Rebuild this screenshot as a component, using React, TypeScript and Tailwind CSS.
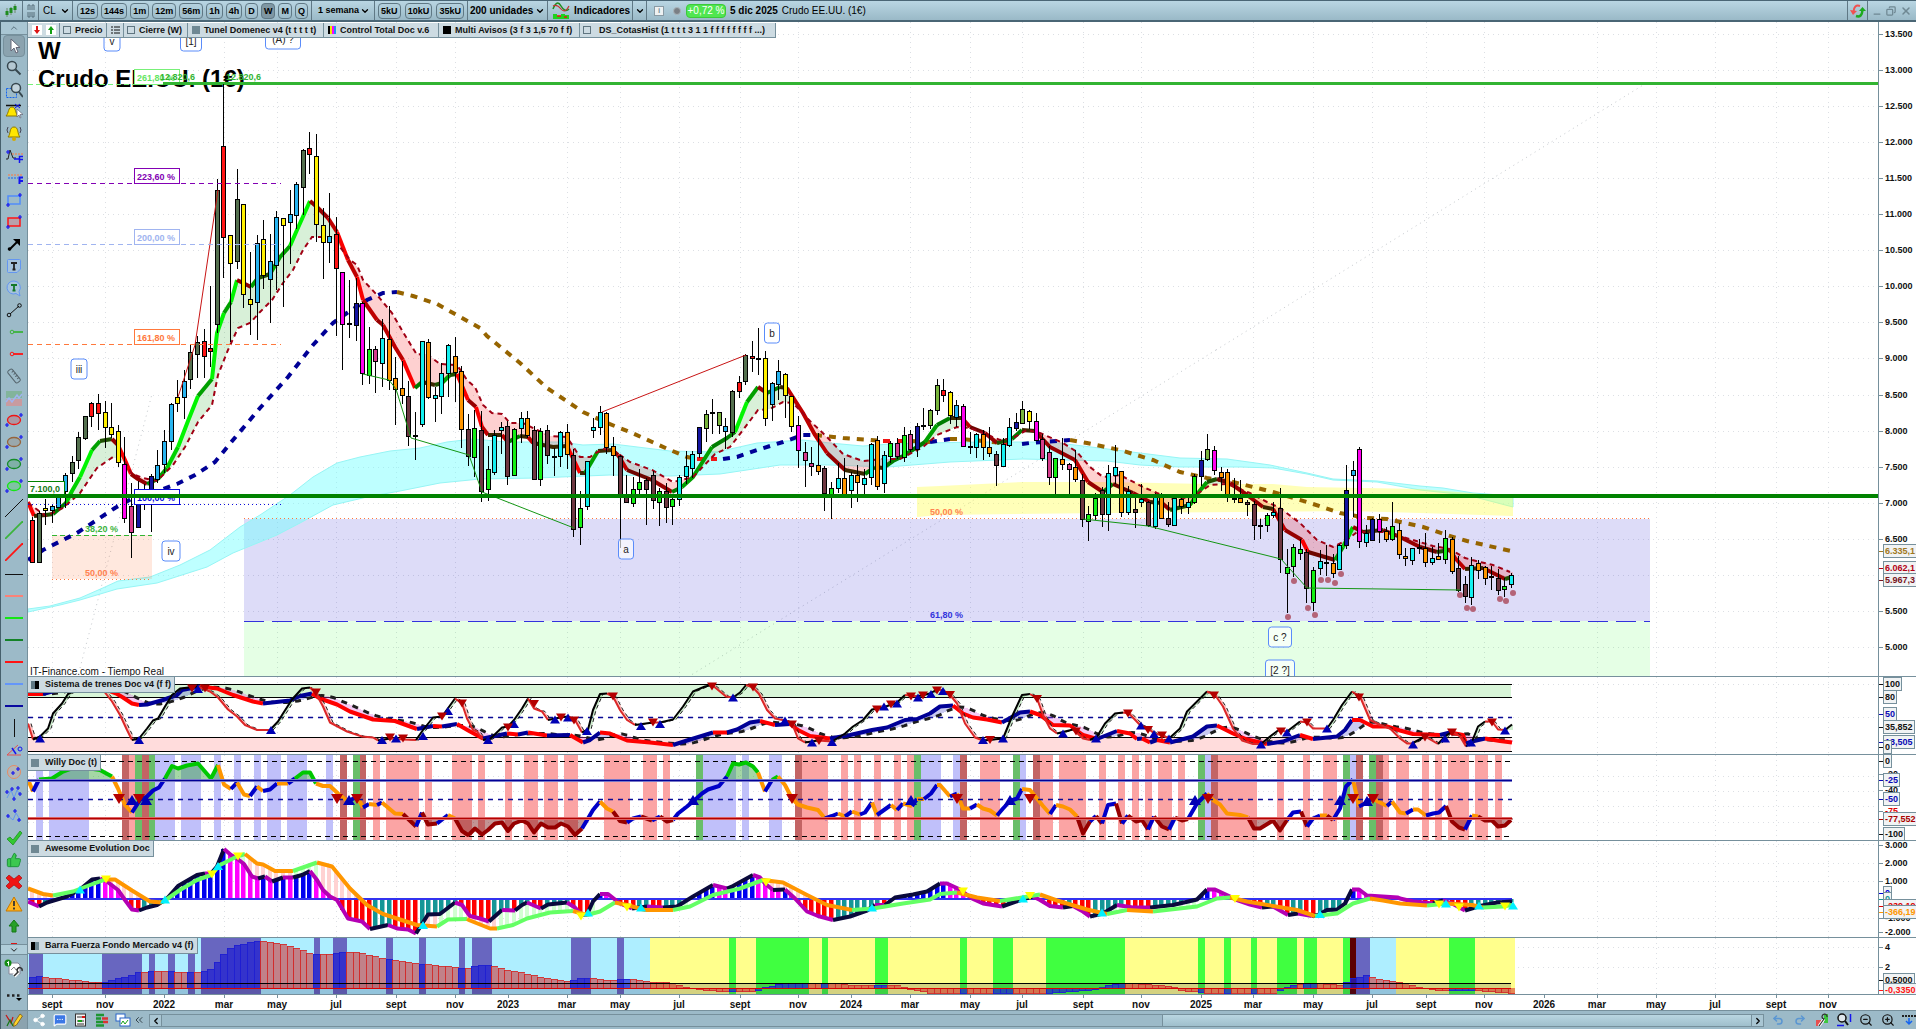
import React from "react";
import {
  Search, Ruler, ThumbsUp, Share2, MessageSquareMore, Undo2, Redo2, ZoomIn, ZoomOut,
  ChevronDown, ChevronUp, ChevronLeft, ChevronRight, ChevronsLeft, X, Minus, Copy,
} from "lucide-react";

type Pt = [number, number];

/* ---------- geometry helpers ---------- */

const STEP = 6.603;
const LAST = 224;
const barX = (i: number) => 32.5 + STEP * i;

/** Parses "x,y x,y" into points. */
const pts = (s: string): Pt[] => s.trim().split(/\s+/).map((p) => p.split(",").map(Number) as Pt);

/** Points sampled on a grid three times finer than the drawing, with its own origin. */
const fine = (ox: number, oy: number, s: string): Pt[] =>
  pts(s).map(([x, y]) => [Math.round(ox + x / 3), Math.round((oy + y / 3) * 2) / 2]);

const at = (line: Pt[], x: number) => {
  if (x <= line[0][0]) return line[0][1];
  for (let i = 1; i < line.length; i++) {
    const [x0, y0] = line[i - 1];
    const [x1, y1] = line[i];
    if (x <= x1) return x1 === x0 ? y1 : y0 + ((y1 - y0) * (x - x0)) / (x1 - x0);
  }
  return line[line.length - 1][1];
};

const poly = (line: Pt[]) => line.map((p) => p.join(",")).join(" ");

const spans = (ox: number, s: string) =>
  s.trim().split(/\s+/).map((p) => {
    const [a, b] = p.split("-").map(Number);
    return [Math.round(ox + a / 3), Math.round(ox + b / 3)] as Pt;
  });

function Stroke({ line, width, color, dash }: { line: Pt[]; width: number; color: (a: Pt, b: Pt) => string; dash?: string }) {
  const runs: { c: string; p: Pt[] }[] = [];
  for (let i = 1; i < line.length; i++) {
    if (line[i][0] < line[i - 1][0]) continue;
    const c = color(line[i - 1], line[i]);
    const last = runs[runs.length - 1];
    if (last && last.c === c) last.p.push(line[i]);
    else runs.push({ c, p: [line[i - 1], line[i]] });
  }
  return (
    <>
      {runs.map((r, i) => (
        <polyline key={i} points={poly(r.p)} fill="none" stroke={r.c} strokeWidth={width} strokeDasharray={dash} strokeLinejoin="round" />
      ))}
    </>
  );
}

/** Area between two lines, coloured by which of them is on top. */
function Between({ a, b, over, under, x0, x1 }: { a: Pt[]; b: Pt[]; over: string; under: string; x0: number; x1: number }) {
  const cells = [];
  for (let x = x0; x < x1; x += 3) {
    const [p, q, r, s] = [at(a, x), at(a, x + 3), at(b, x + 3), at(b, x)];
    const fill = p + q < r + s ? over : under;
    if (fill !== "none") cells.push(<polygon key={x} shapeRendering="crispEdges" fill={fill} points={`${x},${p} ${x + 3},${q} ${x + 3},${r} ${x},${s}`} />);
  }
  return <>{cells}</>;
}

function Marks({ p, color, down, r = 5 }: { p: Pt[]; color: string; down?: boolean; r?: number }) {
  return (
    <>
      {p.map(([x, y], i) => (
        <polygon key={i} fill={color} points={down ? `${x - r},${y - r + 1} ${x + r},${y - r + 1} ${x},${y + r - 1}` : `${x - r},${y + r - 1} ${x + r},${y + r - 1} ${x},${y - r + 1}`} />
      ))}
    </>
  );
}

/* ---------- price data ---------- */

const FILL: Record<string, string> = {
  g: "#54704f", r: "#ff1414", b: "#28b4f0", y: "#fff000", m: "#ff00f0", k: "#d63c8c", n: "#1414a0",
  c: "#14f0f0", l: "#14f014", o: "#ff9600", w: "#6e3741", v: "#78b43c", d: "#000000",
};

const CANDLES = `r517,520,562,562 g511,513,562,562 y499,508,510,525 b505,506,510,523 b495,497,507,507 b473,475,491,508 g456,462,473,482 g432,437,460,469
g416,416,438,440 r402,403,416,427 r394,403,413,430 y401,412,427,448 y403,427,434,438 y425,431,462,467 m437,464,518,523 k483,506,532,558
n481,500,527,527 n484,491,493,510 n474,476,500,532 b450,465,479,483 b430,441,464,473 b403,404,441,450 y380,397,403,412 b370,381,397,419
g345,352,379,389 g336,342,354,378 r329,341,356,378 r286,348,351,367 g179,190,324,333 r84,146,237,278 y235,235,263,342 g169,199,261,269
y204,204,294,308 y252,299,304,335 b235,243,302,340 y220,239,275,289 b234,261,279,323 b211,217,265,290 y218,218,225,307 b190,214,222,264
b182,184,215,229 g149,150,187,215 r132,148,154,174 y134,156,224,242 y208,225,242,279 b193,236,242,263 r217,234,268,336 m272,272,324,370
d280,323,324,338 n278,303,325,341 m302,303,373,385 l327,349,375,384 k346,349,361,393 c319,338,363,387 o306,339,380,390 o357,378,389,425
o361,388,395,404 w381,396,436,446 d412,435,436,460 c341,341,424,427 o339,342,397,399 c387,395,398,422 c363,373,396,414 c344,345,373,397
o337,356,372,402 o366,371,429,448 w414,429,456,466 l410,428,457,477 w411,430,491,502 l446,469,489,501 c430,435,472,475 c422,427,430,454
w421,426,476,485 l428,429,475,476 c412,418,428,443 o411,418,435,438 w426,430,479,480 l428,431,479,486 w425,430,455,464 d448,456,457,476
c431,432,456,467 o424,432,454,469 w449,455,529,537 l491,508,527,545 c461,461,506,510 c418,427,430,438 c406,412,427,435 o412,413,447,454
o437,446,455,476 w455,456,494,548 w475,496,502,503 l477,489,503,507 l469,482,489,498 w478,480,489,525 w471,475,500,509 l488,491,502,526
w483,491,507,523 l498,499,506,525 c475,477,499,506 c451,466,476,484 c451,454,468,478 n427,427,453,458 v410,414,428,442 d399,412,413,434
v412,412,425,434 b418,426,431,449 g390,391,432,437 r376,382,391,398 g354,355,381,385 r341,356,358,372 d328,358,359,375 y351,358,418,426
b382,383,404,421 b360,371,384,400 y373,374,395,418 y396,396,426,432 m416,425,450,468 k442,452,460,487 k447,463,466,476 o433,465,471,475
w466,468,493,511 l482,488,497,519 c463,478,488,493 o458,478,494,497 c472,475,490,508 o465,475,482,502 c469,478,484,498 c443,444,477,485
o436,440,486,490 c451,455,483,493 l441,443,456,463 k438,443,456,459 l427,435,457,462 k430,434,449,452 n423,426,449,457 d408,425,426,430
v409,410,425,429 v379,385,410,415 r379,390,395,402 y391,392,415,424 b400,405,417,427 m404,406,446,447 d432,446,447,454 c433,434,447,458
o430,434,447,460 o427,447,453,457 w451,454,465,486 c438,444,466,467 c418,427,445,447 n413,422,428,431 v401,409,423,424 y410,411,421,429
m413,421,440,441 k434,439,458,461 k446,452,477,485 l458,458,477,494 o438,459,464,470 k463,464,469,494 o450,467,479,482 w474,480,519,527
l506,514,521,541 l493,498,515,520 w487,490,514,527 c465,473,514,531 c445,467,475,484 o471,471,512,517 c486,491,512,515 w497,509,512,528
c484,499,502,507 w501,502,525,527 c493,496,526,529 o493,496,518,519 w502,518,524,527 c497,498,525,526 o498,499,506,514 c498,502,507,514
l474,476,502,504 n451,460,476,486 v434,449,459,461 m446,450,470,475 o467,472,477,491 o469,472,497,502 o478,498,499,503 o480,498,502,503
w500,502,504,516 w501,504,525,540 d519,525,526,539 l513,515,525,532 c502,512,515,518 w488,508,559,573 l549,567,573,613 l544,547,566,577
l539,549,553,560 w549,552,588,603 l567,570,602,611 c550,561,568,575 d545,562,563,576 o554,563,573,578 c544,545,569,570 n465,490,545,549
b461,470,475,517 m447,449,541,548 c525,533,542,547 n518,519,540,541 m514,519,531,543 o527,531,539,542 l502,526,539,541 o523,530,554,559
o548,556,558,566 c548,548,560,565 d539,547,548,554 o533,548,562,567 c547,558,562,565 o543,556,559,560 l530,538,559,564 o537,539,571,574
w556,568,590,592 w576,584,596,603 c557,565,597,605 o560,563,570,579 o566,567,578,585 d566,576,577,590 w569,578,590,595 l578,586,589,597
c573,575,584,588`.trim().split(/\s+/).map((c) => [c[0], ...c.slice(1).split(",").map(Number)] as [string, number, number, number, number]);

const TUNNEL = pts(`28,502 34,516 46,515 53,514 66,503 72,491 80,477 92,450 100,441 112,439 118,445 125,460 131,474 138,479 147,484 158,479 167,468 178,447 188,421 198,396 212,379 217,333 224,313 231,302 237,280 251,287 258,278 270,274 280,257 290,246 297,230 310,201 317,207 328,218 337,232 348,260 357,277 363,300 377,320 383,325 395,347 403,360 415,388 422,382 435,385 442,383 450,375 457,374 468,400 476,407 482,427 488,435 502,435 508,442 520,436 528,437 533,443 553,447 567,446 580,473 585,473 598,451 612,450 618,455 627,470 652,480 672,492 682,487 693,477 712,447 727,438 735,432 747,402 758,387 767,393 780,387 787,388 803,413 815,435 827,453 845,470 865,474 875,467 883,468 893,461 903,456 925,442 937,425 950,418 962,418 970,427 985,433 997,443 1012,439 1022,430 1035,431 1050,447 1075,460 1088,482 1103,492 1113,484 1133,493 1150,502 1162,503 1170,510 1190,505 1198,493 1207,482 1217,479 1230,483 1247,495 1263,507 1273,509 1285,530 1302,540 1308,552 1335,560 1343,547 1353,527 1363,532 1383,530 1400,537 1420,547 1437,552 1450,550 1455,558 1465,569 1483,568 1505,579 1512,577`);
const SIGNAL = pts(`28,503 46,516 63,508 80,493 97,468 113,457 125,462 132,474 143,478 157,481 173,465 185,447 198,422 212,405 218,375 228,350 238,328 250,323 260,312 272,300 283,283 293,270 303,250 312,237 330,237 337,243 350,260 357,265 363,280 377,295 392,313 403,332 417,355 425,353 440,364 457,365 467,380 475,387 483,405 492,413 502,414 510,423 523,423 537,430 550,436 567,437 580,457 590,457 602,449 613,450 630,462 652,470 673,482 693,477 715,454 730,447 743,430 758,410 770,409 783,402 793,403 810,421 827,437 843,454 863,461 882,459 900,459 923,447 937,435 957,427 970,428 983,433 1000,440 1013,438 1027,430 1040,433 1063,443 1077,452 1090,467 1103,477 1120,475 1143,487 1157,493 1173,499 1193,497 1210,485 1227,484 1250,493 1267,502 1280,508 1300,523 1317,540 1333,547 1347,540 1357,532 1387,532 1403,537 1433,546 1450,549 1465,558 1480,562 1493,565 1510,572`);

const TREND: [string, string][] = [
  ["#000096", "28,560 43,550 77,533 115,508 133,498 163,489 177,484 195,475 215,462 233,440 260,408 288,377 313,345 333,323 347,313 367,300 383,293 397,292"],
  ["#966400", "397,292 413,296 437,304 480,328 487,336 520,363 547,388 583,412 607,423 630,432 670,450 687,457 697,459"],
  ["#f01414", "697,459 717,459"],
  ["#000096", "723,459 737,457 757,450 783,442 803,435 815,435"],
  ["#966400", "815,435 843,438 883,441"],
  ["#f01414", "883,441 891,441 900,441 910,441"],
  ["#966400", "910,441 930,442"],
  ["#000096", "930,442 950,439"],
  ["#966400", "950,439 960,439 983,441 1003,443"],
  ["#f01414", "1003,443 1015,445"],
  ["#000096", "1022,444 1030,443 1070,440"],
  ["#966400", "1070,440 1087,443 1120,450 1153,460 1180,472 1207,478 1233,482 1273,492 1307,502 1340,513 1367,518 1387,519 1423,527 1447,535 1467,541 1511,551"],
];

const CLOUD = "28,609 50,606 80,598 105,587 118,581 150,577 180,565 210,550 240,527 260,515 290,495 313,477 337,463 360,457 390,451 420,448 447,442 473,439 507,442 560,442 583,445 613,444 670,451 717,452 757,443 803,440 830,443 863,446 890,444 923,443 983,442 1050,442 1083,446 1140,453 1180,458 1227,459 1270,465 1307,473 1333,479 1377,481 1420,486 1443,488 1473,493 1513,496 1513,507 1467,495 1420,490 1377,482 1333,480 1307,474 1273,468 1240,467 1180,467 1140,465 1107,461 1023,459 950,462 887,467 830,465 780,465 720,474 670,476 610,475 537,478 480,479 440,483 400,491 367,497 333,505 300,523 277,535 233,553 207,567 157,583 117,589 80,600 60,605 28,612";

const DOTS = pts("1294,581 1288,617 1308,608 1315,615 1321,580 1328,580 1335,583 1341,574 1460,595 1467,608 1473,609 1500,599 1506,601 1513,593");

const MONTHS: [number, string][] = [
  [52, "sept"], [105, "nov"], [164, "2022"], [224, "mar"], [277, "may"], [336, "jul"], [396, "sept"], [455, "nov"], [508, "2023"],
  [567, "mar"], [620, "may"], [679, "jul"], [740, "sept"], [798, "nov"], [851, "2024"], [910, "mar"], [970, "may"], [1022, "jul"],
  [1083, "sept"], [1141, "nov"], [1201, "2025"], [1253, "mar"], [1313, "may"], [1372, "jul"], [1426, "sept"], [1484, "nov"], [1544, "2026"],
  [1597, "mar"], [1656, "may"], [1715, "jul"], [1776, "sept"], [1828, "nov"],
];
const DOT_GRID = "1 4";
const LINE = "#76909c";

function maColor(a: Pt, b: Pt) {
  const s = (b[1] - a[1]) / (b[0] - a[0] || 1);
  if (s < -2.2) return "#00f500";
  if (s < -1.7) return "#00d200";
  if (s < -0.9) return "#00a000";
  if (s < -0.4) return "#007d00";
  if (s < -0.1) return "#1e5000";
  if (s < 0.25) return "#3c2800";
  if (s < 0.5) return "#6e0500";
  if (s < 1.1) return "#960000";
  if (s < 1.9) return "#be0000";
  return "#fa0000";
}

function Pane({ top, height, grid, children, label }: { top: number; height: number; grid: number[]; children: React.ReactNode; label: string }) {
  return (
    <svg role="img" aria-label={label} viewBox={`28 ${top} 1888 ${height}`} preserveAspectRatio="none" className="block h-full w-full font-['Liberation_Sans',Arial,sans-serif]">
      <rect x="28" y={top} width="1888" height={height} fill="#fff" />
      <g stroke="#dcdfe4" strokeDasharray={DOT_GRID} shapeRendering="crispEdges">
        {grid.map((y) => <line key={y} x1="28" x2="1878" y1={y + 0.5} y2={y + 0.5} />)}
        {MONTHS.filter((m) => !m[1].startsWith("20")).map(([x]) => <line key={x} x1={x + 0.5} x2={x + 0.5} y1={top} y2={top + height} />)}
      </g>
      {children}
      <g stroke={LINE} shapeRendering="crispEdges">
        <line x1="1878.5" x2="1878.5" y1={top} y2={top + height} />
        <line x1="28" x2="1916" y1={top + height - 0.5} y2={top + height - 0.5} />
      </g>
    </svg>
  );
}

function Tick({ y, text, color = "#111" }: { y: number; text: string; color?: string }) {
  return (
    <g>
      <line x1="1879" x2="1883" y1={y + 0.5} y2={y + 0.5} stroke={LINE} shapeRendering="crispEdges" />
      <text x="1885" y={y + 3} fontSize="9" fontWeight="700" fill={color}>{text}</text>
    </g>
  );
}

function Tag({ y, text, color = "#111", w }: { y: number; text: string; color?: string; w: number }) {
  return (
    <g>
      <line x1="1879" x2="1883" y1={y + 0.5} y2={y + 0.5} stroke={color} shapeRendering="crispEdges" />
      <rect x="1883.5" y={y - 6.5} width={w} height="13" fill="#f1f3f4" stroke={LINE} />
      <text x="1885" y={y + 3} fontSize="9" fontWeight="700" fill={color}>{text}</text>
    </g>
  );
}

function Wave({ x, y, w, text }: { x: number; y: number; w: number; text: string }) {
  return (
    <g>
      <rect x={x - w / 2} y={y - 10} width={w} height="20" rx="3" fill="#fff" fillOpacity="0.65" stroke="#5a8cfa" />
      <text x={x} y={y + 4} fontSize="10" textAnchor="middle" fill="#222">{text}</text>
    </g>
  );
}

function Fib({ y, text, color, dash }: { y: number; text: string; color: string; dash: string }) {
  return (
    <g>
      <line x1="28" x2="281" y1={y + 0.5} y2={y + 0.5} stroke={color} strokeDasharray={dash} shapeRendering="crispEdges" />
      <rect x="134.5" y={y - 14.5} width="45" height="15" fill="#fff" stroke={color} shapeRendering="crispEdges" />
      <text x="137" y={y - 3} fontSize="9" fontWeight="700" fill={color}>{text}</text>
    </g>
  );
}

function PriceChart() {
  const ticks = Array.from({ length: 18 }, (_, i) => Math.round(34 + i * 36.05));
  return (
    <Pane top={22} height={655} grid={ticks} label="Crudo EE.UU. semanal">
      <g stroke="#c4c8cc" strokeDasharray="1 4">
        <line x1="80" y1="668" x2="152" y2="394" />
        <line x1="688" y1="677" x2="1216" y2="350" />
        <line x1="1216" y1="350" x2="1648" y2="82" />
      </g>
      <rect x="244" y="519" width="1406" height="102" fill="#4038d8" fillOpacity="0.175" />
      <rect x="244" y="621" width="1406" height="56" fill="#00ff00" fillOpacity="0.1" />
      <polygon points={CLOUD} fill="#6effff" fillOpacity="0.45" stroke="#96f5f5" strokeWidth="1" />
      <polygon points="917,487 940,486 1023,482 1107,482 1207,484 1273,484 1307,487 1420,489 1470,493 1513,497 1513,516 1420,513 1350,511 1107,513 940,515 917,517" fill="#ffff50" fillOpacity="0.4" />
      <line x1="244" x2="1650" y1="518.5" y2="518.5" stroke="#ff783c" strokeDasharray="1 3" shapeRendering="crispEdges" />
      <line x1="244" x2="1650" y1="621.5" y2="621.5" stroke="#3232dc" strokeDasharray="20 8" shapeRendering="crispEdges" />
      <rect x="52" y="535" width="100" height="44" fill="#ff783c" fillOpacity="0.17" />
      <line x1="52" x2="152" y1="535.5" y2="535.5" stroke="#32b432" strokeDasharray="5 3" shapeRendering="crispEdges" />
      <line x1="52" x2="152" y1="579.5" y2="579.5" stroke="#ff783c" strokeDasharray="1 3" shapeRendering="crispEdges" />
      <Between a={TUNNEL} b={SIGNAL} over="rgba(60,180,60,0.2)" under="rgba(250,60,60,0.24)" x0={28} x1={1511} />

      <g fontSize="24" fontWeight="700" fill="#000">
        <text x="38" y="59">W</text>
        <text x="38" y="87">Crudo EE.UU. (1€)</text>
      </g>
      <line x1="28" x2="163" y1="84.5" y2="84.5" stroke="#78f078" strokeDasharray="5 3" shapeRendering="crispEdges" />
      <rect x="134.5" y="69.5" width="45" height="15" fill="#fff" stroke="#78f078" shapeRendering="crispEdges" />
      <text x="137" y="81" fontSize="9" fontWeight="700" fill="#64e664">261,80 %</text>
      <g fontSize="9" fontWeight="700" fill="#32b432">
        <text x="160" y="80">12.820,6</text>
        <text x="226" y="80">12.820,6</text>
      </g>
      <rect x="163" y="82" width="1715" height="3" fill="#32b432" />

      {TREND.map(([c, s], i) => (
        <polyline key={i} points={s} fill="none" stroke={c} strokeWidth="4" strokeDasharray="7 7" />
      ))}
      <Stroke line={TUNNEL} width={4} color={maColor} />
      <polyline points={poly(SIGNAL)} fill="none" stroke="#a00014" strokeWidth="2" strokeDasharray="5 4" />

      {CANDLES.map(([k, hi, top, bot, lo], i) => {
        const x = Math.floor(barX(i));
        return (
          <g key={i} shapeRendering="crispEdges">
            <rect x={x} y={hi} width="1" height={Math.max(1, lo - hi)} fill="#000" />
            <rect x={x - 1.5} y={top + 0.5} width="4" height={Math.max(0.5, bot - top - (k === "d" ? 0.5 : 0))} fill={FILL[k]} stroke="#000" />
          </g>
        );
      })}

      <g stroke="#c81414">
        <line x1="178" y1="397" x2="195" y2="345" />
        <line x1="195" y1="345" x2="218" y2="190" />
        <line x1="602" y1="412" x2="746" y2="355" />
      </g>
      <g stroke="#149614" fill="none">
        <polyline points="363,374 389,380 396,389 411,438 469,455 482,492 574,528" />
        <polyline points="1083,519 1148,526 1281,559 1307,588 1460,590" />
      </g>
      {DOTS.map(([x, y], i) => <circle key={i} cx={x} cy={y} r="3" fill="#b46478" />)}

      <g fontSize="9" fontWeight="700">
        <text x="85" y="532" fill="#3cb43c">38,20 %</text>
        <text x="85" y="576" fill="#ff8250">50,00 %</text>
        <text x="930" y="515" fill="#ff8250">50,00 %</text>
        <text x="930" y="618" fill="#3232dc">61,80 %</text>
      </g>
      <Fib y={183} text="223,60 %" color="#8200b4" dash="5 4" />
      <Fib y={244} text="200,00 %" color="#a0b4f0" dash="5 4" />
      <Fib y={344} text="161,80 %" color="#ff783c" dash="5 4" />
      <Fib y={504} text="100,00 %" color="#0a0adc" dash="1 3" />
      <rect x="28" y="494" width="1850" height="4" fill="#008200" />
      <rect x="27.5" y="481.5" width="37" height="13" fill="#fff" stroke="#008200" />
      <text x="30" y="492" fontSize="9" fontWeight="700" fill="#147814">7.100,0</text>

      <Wave x={112} y={41} w={16} text="v" />
      <Wave x={191} y={41} w={21} text="[1]" />
      <Wave x={283} y={39} w={35} text="(A) ?" />
      <Wave x={79} y={369} w={16} text="iii" />
      <Wave x={171} y={551} w={18} text="iv" />
      <Wave x={626} y={549} w={15} text="a" />
      <Wave x={772} y={333} w={15} text="b" />
      <Wave x={1280} y={637} w={23} text="c ?" />
      <Wave x={1280} y={670} w={29} text="[2 ?]" />
      <text x="30" y="675" fontSize="10" fill="#111">IT-Finance.com - Tiempo Real</text>

      {ticks.map((y, i) => {
        const v = 13500 - i * 500;
        return v === 6000 ? null : <Tick key={y} y={y} text={`${Math.floor(v / 1000)}.${String(v % 1000).padStart(3, "0")}`} />;
      })}
      <Tag y={551} text="6.335,1" color="#a0781e" w={36} />
      <Tag y={568} text="6.062,1" color="#b40014" w={36} />
      <Tag y={580} text="5.967,3" color="#78141e" w={36} />
    </Pane>
  );
}

/* ---------- Sistema de trenes ---------- */

const FAST = [
  ...fine(0, 670, "84,160 98,208 120,200 143,175 160,130 185,100 205,72 250,50 310,60 335,95 360,135 380,180 397,210 417,205 440,175 460,152 475,145 495,110 515,75 540,55 595,50 630,65 655,82 685,118 710,140 735,165 770,180 810,180 835,155 850,130 875,88 905,55 930,52 948,70 970,110 990,157 1040,185 1085,200 1120,203 1135,212 1170,205 1210,208 1248,210 1270,180 1300,142 1325,140 1365,85 1385,100 1400,145 1420,180"),
  ...fine(470, 670, "20,185 40,210 60,207 95,172 115,170 133,150 155,115 173,85 193,115 215,125 235,150 270,143 293,140 315,150 335,188 355,178 370,120 390,72 410,70 430,80 450,120 470,150 495,165 550,157 570,158 610,148 640,110 668,65 705,50 727,45 768,80 790,82 810,68 827,45 848,52 868,72 890,120 915,145 945,152 965,160 985,205 1005,217 1045,212 1085,215 1125,190 1150,170 1180,150 1205,118 1240,112 1280,98 1305,75 1340,80 1380,70 1400,58"),
  ...fine(940, 670, "10,62 30,75 50,100 75,160 105,203 130,212 190,205 215,140 247,75 270,72 290,85 310,135 330,175 350,190 400,178 430,205 450,210 470,200 495,160 525,130 550,127 567,130 600,165 625,175 645,192 665,195 687,205 720,175 740,125 770,95 800,65 825,75 850,110 880,175 905,212 940,222 962,222 990,200 1015,182 1040,185 1080,155 1100,157 1120,175 1160,175 1180,150 1205,105 1237,65 1260,80 1290,150 1320,165 1350,175"),
  ...fine(1400, 670, "0,205 20,220 37,220 75,200 115,222 135,200 155,185 180,200 197,230 215,215 235,170 255,155 275,155 295,178 315,180 335,163"),
];
const SLOW = [
  ...fine(0, 670, "84,72 130,72 200,52 300,52 350,72 370,82 395,100 417,105 440,103 490,90 530,75 545,60 600,50 650,55 700,75 760,95 790,100 870,92 900,78 935,70 960,85 1010,103 1050,125 1120,148 1185,153 1250,177 1300,168 1325,170 1370,162"),
  ...fine(470, 670, "0,185 40,205 110,190 145,193 175,188 230,197 300,195 340,217 360,210 390,188 420,190 470,212 540,217 610,225 650,212 730,188 770,187 800,178 840,157 870,153 915,165 960,162 985,180 1020,198 1080,205 1140,195 1205,180 1250,172 1305,150 1340,147 1380,130"),
  ...fine(940, 670, "0,110 40,107 70,130 100,143 140,148 185,157 240,128 270,125 300,135 340,165 390,167 430,195 470,207 530,183 570,190 590,207 605,205 630,217 650,210 690,217 760,200 800,170 830,167 880,190 920,208 980,222 1030,215 1080,195 1120,207 1190,200 1215,180 1237,150 1260,150 1300,170 1340,170"),
  ...fine(1400, 670, "0,182 40,192 120,195 150,187 190,195 197,220 215,215 255,205 300,213 335,217"),
];
const shift = (line: Pt[], dx: number): Pt[] => line.map(([x, y]) => [x + dx, y] as Pt).filter(([x]) => x <= 1512);
const SLOW_LAG = (() => {
  const out: Pt[] = [];
  for (let x = 28; x <= 1511; x += 6) out.push([x, (at(SLOW, x - 6) + at(SLOW, x - 14) + at(SLOW, x - 22)) / 3]);
  return out;
})();

function TrainsPane() {
  return (
    <Pane top={677} height={78} grid={[684, 717]} label="Sistema de trenes Doc v4">
      <rect x="28" y="684" width="1483" height="13" fill="#d8f5d8" />
      <rect x="28" y="738" width="1483" height="13" fill="#ffdcdc" />
      <g stroke="#000" shapeRendering="crispEdges">
        {[684.5, 697.5, 737.5, 751.5].map((y) => <line key={y} x1="28" x2="1512" y1={y} y2={y} />)}
      </g>
      <line x1="28" x2="1512" y1="717.5" y2="717.5" stroke="#0a0a96" strokeWidth="1.5" strokeDasharray="5 5" />
      <Between a={SLOW} b={SLOW_LAG} over="rgba(40,40,200,0.25)" under="rgba(220,80,220,0.3)" x0={28} x1={1511} />
      <Between a={FAST} b={shift(FAST, 3)} over="rgba(60,180,60,0.25)" under="rgba(250,60,60,0.3)" x0={28} x1={1511} />
      <polyline points={poly(SLOW_LAG)} fill="none" stroke="#1e1e1e" strokeWidth="3" strokeDasharray="6 6" />
      <Stroke line={SLOW} width={4} color={(a, b) => (b[1] < a[1] ? "#000096" : "#ff0000")} />
      <polyline points={poly(shift(FAST, 3))} fill="none" stroke="#222" strokeDasharray="4 3" />
      <Stroke line={FAST} width={2} color={(a, b) => (b[1] < a[1] ? "#000" : "#dc2828")} />
      <Marks color="#0000b4" p={[
        ...fine(0, 670, "120,205 417,210 593,57 812,180 1147,210 1187,205 1268,198 1345,123"),
        ...fine(470, 670, "55,210 133,162 255,148 293,142 352,183 512,168 570,162 788,82 945,152 1025,218 1085,216 1243,110 1282,100 1343,82 1382,72 1420,63"),
        ...fine(940, 670, "130,210 190,205 370,190 467,205 603,167 643,192 687,205 962,223 1040,187 1160,175 1418,223"),
        ...fine(1400, 670, "135,205 213,218 315,182"),
      ]} />
      <Marks down color="#b40000" p={[
        ...fine(0, 670, "575,55 615,55 948,68 1170,203 1208,205 1327,140 1385,100"),
        ...fine(470, 670, "113,172 193,102 272,143 313,152 430,79 550,158 727,50 848,52 965,163 1047,213 1222,118 1262,104 1322,80 1360,77 1402,62"),
        ...fine(940, 670, "30,75 150,210 290,87 407,185 565,130 625,180 665,197 823,77 1023,185 1100,157 1258,83"),
        ...fine(1400, 670, "75,203 155,187 275,157"),
      ]} />
      <Tag y={714} text="50" color="#0a0ab4" w={13} />
      <Tag y={742} text="13,505" color="#0a0ab4" w={31} />
      <Tag y={727} text="35,852" w={31} />
      <Tag y={684} text="100" w={18} />
      <Tag y={697} text="80" w={13} />
      <Tag y={747} text="0" w={8} />
    </Pane>
  );
}

/* ---------- Willy ---------- */

const WILLY_BANDS: [string, Pt[]][] = [
  ["#c0c0fa", [...spans(0, "108-129 147-267 465-525 543-603 642-663 702-723 762-783 801-843 861-921 978-999"), ...spans(470, "699-798 816-837 897-936 1353-1413"), ...spans(940, "39-60 240-258 795-813 1230-1248")]],
  ["#fba4a4", [...spans(0, "387-405 1119-1140 1158-1257 1275-1296 1356-1416"), ...spans(470, "24-45 105-126 162-204 222-264 282-324 402-480 519-561 579-600 996-1074 1113-1134 1152-1173 1212-1233 1272-1293 1311-1332"), ...spans(940, "120-180 300-339 357-438 477-498 534-555 576-597 615-636 654-696 714-735 834-951 1011-1032 1089-1110 1149-1191 1329-1347 1368-1407"), ...spans(1400, "0-27 66-87 105-126 144-207 225-264 285-306")]],
  ["#c36464", [...spans(0, "366-387 426-447 1020-1041 1080-1098"), ...spans(470, "975-996"), ...spans(940, "60-81 279-300 813-834 1248-1269 1308-1329")]],
  ["#69be69", [...spans(0, "405-426 447-465 1059-1080"), ...spans(470, "678-699 1332-1353"), ...spans(940, "219-240 774-795 1209-1230 1287-1308")]],
];
const WILLY = [
  ...fine(0, 670, "84,328 98,365 118,328 155,325 190,305 230,290 300,300 335,320 355,355 375,405 395,427 420,390 440,380 460,362 478,352 495,325 515,288 535,295 560,287 593,280 632,325 653,285 673,343 692,357 710,337 733,373 750,378 770,350 790,363 810,358 832,340 865,340 885,325 910,308 930,308 948,340 970,348 990,348 1015,370 1045,395 1070,380 1090,412 1108,402 1130,405 1147,398 1185,430 1208,432 1247,470 1267,428 1285,463 1310,460 1345,435 1365,445 1385,483 1405,495"),
  ...fine(470, 670, "0,490 15,475 37,493 55,480 75,460 95,457 115,483 133,460 155,452 175,460 193,487 213,460 235,472 255,473 272,460 293,470 315,495 335,475 355,445 370,420 390,395 410,415 430,425 450,453 470,458 490,445 512,440 545,452 570,440 590,455 610,450 625,430 650,410 670,395 695,370 715,358 748,348 770,320 788,280 808,283 827,278 848,290 865,307 885,365 905,330 925,320 945,345 965,385 985,403 1010,412 1045,420 1065,445 1085,438 1105,430 1125,440 1145,425 1170,433 1185,427 1205,398 1222,435 1262,405 1280,420 1300,400 1325,408 1340,387 1362,387 1382,370 1402,345"),
  ...fine(940, 670, "0,345 30,380 50,370 70,415 90,415 110,403 130,415 150,422 170,437 190,415 210,393 230,385 247,357 270,360 290,385 310,408 330,432 347,405 370,410 390,418 410,440 428,490 450,455 467,438 487,460 505,405 527,400 545,460 565,437 587,455 605,450 625,478 643,440 665,470 687,478 705,443 725,452 743,447 770,400 800,370 820,390 840,403 862,430 900,435 925,443 942,475 960,476 1000,452 1020,482 1040,450 1060,428 1082,425 1100,470 1120,445 1140,437 1160,437 1180,450 1200,415 1217,350 1238,329 1258,410 1275,400 1295,385 1340,408 1357,395"),
  ...fine(1400, 670, "0,428 18,430 40,418 55,418 78,437 98,430 118,428 137,408 157,455 178,473 195,478 215,437 235,440 255,452 275,452 295,470 315,467 333,450"),
];
const willyColor = (a: Pt, b: Pt) => {
  if ((a[1] + b[1]) / 2 < 780.5) return b[1] - a[1] > 16 ? "#ff9600" : "#00c800";
  if (b[1] > 818.5 && b[1] >= a[1] - 6 && a[1] > 800) return "#960000";
  if (b[1] < a[1]) return a[1] > 820 && b[1] > 819 ? "#960000" : "#0000c8";
  return "#ff9600";
};

function WillyPane() {
  const upper: Pt[] = [[28, 780], [1512, 780]];
  const lower: Pt[] = [[28, 818], [1512, 818]];
  return (
    <Pane top={755} height={86} grid={[776, 791, 806, 822]} label="Willy Doc">
      {WILLY_BANDS.map(([c, list]) => list.map(([a, b]) => <rect key={c + a} x={a} y="755" width={b - a} height="86" fill={c} />))}
      <g stroke="#000" strokeDasharray="5 4" shapeRendering="crispEdges">
        <line x1="101" x2="1512" y1="761.5" y2="761.5" />
        <line x1="28" x2="1512" y1="836.5" y2="836.5" />
      </g>
      <Between a={WILLY} b={upper} over="rgba(40,160,40,0.42)" under="none" x0={34} x1={1511} />
      <Between a={WILLY} b={lower} over="none" under="rgba(110,0,0,0.42)" x0={28} x1={1511} />
      <Stroke line={WILLY} width={4} color={willyColor} />
      <rect x="28" y="779" width="1484" height="3" fill="#7878c8" />
      <rect x="28" y="780" width="1484" height="1" fill="#000096" />
      <rect x="28" y="817" width="1484" height="3" fill="#dc6464" />
      <rect x="28" y="818" width="1484" height="1" fill="#b40000" />
      <line x1="28" x2="1512" y1="799.5" y2="799.5" stroke="#0a0a96" strokeWidth="1.5" strokeDasharray="5 5" />
      <Marks r={6} color="#0000b4" p={[...fine(0, 670, "397,390 438,390 1048,390"), ...fine(470, 670, "670,390 1323,390"), ...fine(940, 670, "210,390 765,390 1200,390 1280,393")]} />
      <Marks r={6} down color="#b40000" p={[...fine(0, 670, "357,387 417,387 1010,387 1072,387"), ...fine(470, 670, "965,387"), ...fine(940, 670, "50,387 270,387 803,387 1238,387 1298,387")]} />
      <Tick y={774} text="-20" /><Tick y={790} text="-40" /><Tick y={811} text="-75" color="#dc0000" />
      <Tag y={761} text="0" w={8} />
      <Tag y={780} text="-25" color="#0a0ab4" w={16} />
      <Tag y={799} text="-50" color="#0a0ab4" w={16} />
      <Tag y={834} text="-100" w={21} />
      <Tag y={819} text="-77,552" color="#aa0000" w={36} />
    </Pane>
  );
}

/* ---------- Awesome Evolution ---------- */

const AO = [
  ...fine(0, 670, "84,695 118,710 140,698 200,680 240,658 275,628 300,625 320,635 355,660 375,690 395,718 417,722 440,712 470,705 500,685 535,648 590,615 615,610 632,610 650,590 672,537 693,555 712,565 733,582 755,620 775,625 795,620 815,635 850,622 880,622 905,615 930,603 950,630 970,660 990,680 1010,690 1045,745 1085,755 1110,777 1165,765 1190,775 1225,778 1248,790 1285,733 1320,732 1365,697 1385,705 1405,730"),
  ...fine(470, 670, "0,738 30,745 57,755 95,720 135,722 155,705 172,697 213,715 235,703 290,697 315,712 335,735 350,733 370,695 390,672 415,672 450,700 485,715 530,710 580,712 620,710 670,680 730,645 770,655 790,648 850,615 870,622 885,640 910,660 945,658 975,685 1010,725 1045,738 1090,750 1140,740 1190,722 1215,705 1245,705 1275,683 1330,673 1370,665"),
  ...fine(940, 670, "0,640 20,640 60,658 95,685 130,700 185,710 245,688 280,680 300,690 330,708 370,712 400,708 430,725 450,740 490,730 530,705 580,713 630,712 700,705 770,688 800,658 825,658 870,680 890,690 930,703 965,713 1000,710 1045,735 1075,730 1115,738 1135,735 1160,720 1190,718 1215,700 1237,658 1258,658 1280,677 1375,682"),
  ...fine(1400, 670, "0,686 40,695 100,700 130,692 160,702 195,722 240,708 290,698 335,695"),
];
const AO_SIGNAL = [
  ...fine(0, 670, "84,655 130,672 160,677 220,665 270,645 315,628 345,628 395,662 450,695 485,697 540,660 590,630 632,615 660,585 712,560 735,552 770,580 790,583 825,603 880,603 950,577 995,590 1050,655 1100,705 1150,732 1250,765 1310,770 1345,748 1400,747"),
  ...fine(470, 670, "0,752 60,775 80,775 130,765 170,745 240,728 310,723 350,735 390,725 435,697 470,705 525,720 610,720 660,710 730,675 810,655 880,630 940,638 1010,675 1070,705 1145,720 1210,715 1300,700 1380,688"),
  ...fine(940, 670, "0,672 50,667 110,683 180,693 245,683 300,673 350,692 440,718 500,732 560,720 640,725 770,710 830,685 870,682 920,695 1070,720 1125,738 1190,730 1240,700 1290,685 1330,692"),
  ...fine(1400, 670, "0,700 80,707 140,700 215,705 250,712 310,710 335,705"),
];

function AwesomePane() {
  const base = 899;
  const bars = [];
  for (let i = 0; i <= LAST; i++) {
    const x = Math.floor(barX(i)) - 2;
    const y = at(AO, barX(i));
    const s = at(AO_SIGNAL, barX(i));
    const rising = y < at(AO, barX(i) - STEP);
    const fill = y < base ? (rising ? "#0000f0" : "#ff00ff") : rising ? "#149696" : "#ff0000";
    const sRising = s < at(AO_SIGNAL, barX(i) - STEP);
    const beyond = y < base ? s < y : s > y || s < base;
    if (beyond) bars.push(<rect key={`s${i}`} x={x} y={Math.min(s, y)} width="4" height={Math.abs(s - y)} fill={sRising ? "#d2ffd2" : "#ffd2d2"} />);
    bars.push(<rect key={i} x={x} y={Math.min(base, y)} width="4" height={Math.abs(base - y)} fill={fill} />);
    bars.push(<rect key={`h${i}`} x={x + 4} y={Math.min(base, y)} width="1" height={Math.abs(base - y)} fill={fill} fillOpacity="0.5" />);
  }
  return (
    <Pane top={841} height={97} grid={[844, 863, 881, 918]} label="Awesome Evolution Doc">
      <g shapeRendering="crispEdges">{bars}</g>
      <rect x="28" y="898" width="1484" height="2" fill="#3232f0" />
      <Stroke line={AO} width={4} color={(a, b) => (b[1] < a[1] ? "#0a0a3c" : "#b400b4")} />
      <Stroke line={AO_SIGNAL} width={4} color={(a, b) => (b[1] < a[1] ? "#64ff64" : "#ff9600")} />
      <Marks color="#00f0ff" p={[...fine(0, 670, "240,658 495,688 655,588 1270,765"), ...fine(470, 670, "353,728 512,713 1207,713"), ...fine(940, 670, "248,685 487,728 1140,732"), ...fine(1400, 670, "137,700 237,707 338,707")]} />
      <Marks down color="#ffff00" p={[...fine(0, 670, "318,628 635,613 713,560"), ...fine(470, 670, "332,740 470,713 887,638"), ...fine(940, 670, "70,665 270,678 885,687"), ...fine(1400, 670, "117,703 177,712 315,709")]} />
      <Tick y={845} text="3.000" /><Tick y={863} text="2.000" /><Tick y={881} text="1.000" /><Tick y={918} text="-1.000" /><Tick y={932} text="-2.000" />
      <Tag y={893} text="0" color="#0000dc" w={8} />
      <Tag y={899} text="0" color="#149696" w={8} />
      <Tag y={906} text="-239,19" color="#dc0000" w={36} />
      <Tag y={912} text="-366,19" color="#ff9600" w={36} />
    </Pane>
  );
}

/* ---------- Barra Fuerza ---------- */

const PURPLE = [...spans(0, "87-129 306-426 447-465 504-525 564-585 603-783 942-960 999-1041 1158-1179 1257-1278 1377-1395 1416-1476"), ...spans(470, "303-363 441-462"), ...spans(940, "1248-1290")];
const GREEN = [...spans(470, "777-798 858-1017 1056-1074 1215-1254"), ...spans(940, "60-81 159-219 318-555 774-795 852-873 933-951 1011-1071 1092-1131 1209-1230"), ...spans(1400, "147-225")];
const FORCE = [
  ...fine(0, 670, "84,925 118,918 180,925 240,932 305,937 365,922 415,907 470,903 600,908 635,897 655,875 680,840 715,825 770,812 800,815 860,825 900,837 930,850 990,852 1030,845 1080,848 1120,858 1180,868 1250,880 1310,885 1370,892 1420,892"),
  ...fine(470, 670, "0,893 30,885 60,885 100,897 150,905 200,918 250,925 300,933 340,922 370,922 430,932 470,925 540,935 600,938 640,947 680,960 740,965 860,965 890,950 940,940 1020,937 1090,938 1160,947 1230,943 1290,947 1320,960 1380,970"),
  ...fine(940, 670, "0,972 320,972 420,965 480,960 500,945 560,937 620,942 700,950 730,965 800,970 1000,972 1030,960 1050,945 1120,938 1200,945 1240,925 1280,915 1330,930 1370,935"),
  ...fine(1400, 670, "0,935 40,945 70,957 140,965 200,962 280,967 345,972"),
];

function ForcePane() {
  const inBand = (list: Pt[], x: number) => list.some(([a, b]) => x >= a && x < b);
  const base = 988;
  return (
    <Pane top={938} height={57} grid={[947, 967]} label="Barra Fuerza Fondo Mercado v4">
      <g shapeRendering="crispEdges">
        <rect x="28" y="938" width="622" height="57" fill="#aeeeff" />
        <rect x="650" y="938" width="865" height="57" fill="#ffff8c" />
        <rect x="1370" y="938" width="26" height="57" fill="#aeeeff" />
        {PURPLE.map(([a, b]) => <rect key={a} x={a} y="938" width={b - a} height="57" fill="#6866c0" />)}
        {GREEN.map(([a, b]) => <rect key={a} x={a} y="938" width={b - a} height="57" fill="#40ff40" />)}
        <rect x="1350" y="938" width="6" height="57" fill="#5c0000" />
        <rect x="28" y="983" width="1483" height="12" fill="#281e50" fillOpacity="0.2" />
        {CANDLES.map((_, i) => {
          const cx = barX(i);
          const y = at(FORCE, cx);
          const blue = inBand(PURPLE, cx) || inBand(GREEN, cx) || (y < base && at(FORCE, cx - STEP) > y + 0.8);
          const x = Math.floor(cx) - 3;
          return (
            <g key={i} fill={blue ? "#1e1ed2" : "#d22828"}>
              <rect x={x} y={Math.min(y, base)} width="7" height={Math.abs(base - y)} fillOpacity={blue ? 0.7 : 0.55} />
              <rect x={x} y={Math.min(y, base)} width="1" height={Math.abs(base - y)} fillOpacity="0.9" />
              <rect x={x} y={y < base ? y : y - 1} width="7" height="1" fillOpacity="0.8" />
            </g>
          );
        })}
        <rect x="28" y="988" width="1483" height="1" fill="#dc0000" />
        <rect x="28" y="983" width="1483" height="1" fill="#000" />
      </g>
      <Tick y={947} text="4" /><Tick y={967} text="2" />
      <Tag y={980} text="0,5000" w={31} />
      <Tag y={990} text="-0,3350" color="#ff1414" w={36} />
    </Pane>
  );
}

/* ---------- chrome ---------- */

function Cross({ x, y }: { x: number; y: number }) {
  return <path d={`M${x - 2} ${y}h4M${x} ${y - 2}v4`} stroke="#1414f0" strokeWidth="1.2" />;
}

function DrawIcon({ kind }: { kind: string }) {
  const [name, color = "#000"] = kind.split(":");
  let body: React.ReactNode = null;
  if (name === "cursor") body = <path d="M6 2v12l3-3 2 5 2-1-2-4.500h4z" fill="#fff" stroke="#667" />;
  else if (name === "search") body = <><circle cx="7" cy="7" r="4.500" fill="#b4c8d2" stroke="#37474f" strokeWidth="1.500" /><path d="m10.500 10.500 5 5" stroke="#37474f" strokeWidth="2" /></>;
  else if (name === "area") body = <><rect x="1.500" y="7.500" width="10" height="9" fill="none" stroke="#1464f0" strokeDasharray="2 1" /><circle cx="11" cy="7" r="4.500" fill="#c3d4dc" stroke="#37474f" strokeWidth="1.500" /><path d="m14 11 4 5" stroke="#37474f" strokeWidth="2" /></>;
  else if (name === "bellx") body = <><path d="M1 2.500h15" stroke="#111" strokeWidth="1.500" /><path d="M7 4c-4 0-3 6-6 9h12c-3-3-2-9-6-9z" fill="#ffe600" stroke="#8c7800" /><path d="m10 1 5 4m0-4-5 4" stroke="#1414f0" /><path d="M12 6v8l2-2 1 3 1-.500-1-3h3z" fill="#fff" stroke="#667" strokeWidth=".7" /></>;
  else if (name === "bell") body = <><path d="M9 2c-5 0-3 7-6 10h12c-3-3-1-10-6-10z" fill="#ffe600" stroke="#8c7800" /><circle cx="9" cy="14" r="2" fill="#d2aa00" /><path d="M3 2q-2 3 0 6M15 2q2 3 0 6" stroke="#445" fill="none" /></>;
  else if (name === "alertf") body = <><path d="M1 12h2l2-9 3 8h3" fill="none" stroke="#222" /><path d="M7 7h11" stroke="#ff783c" strokeDasharray="2 1" /><path d="M9 12h5M14.500 16V9.500H18M14.500 12.500H18" fill="none" stroke="#1414f0" strokeWidth="1.500" /><Cross x={3} y={5} /></>;
  else if (name === "f") body = <><path d="M3 6h14" stroke="#ff783c" strokeDasharray="2 1" /><path d="M3 9h10" stroke="#1464f0" strokeDasharray="2 1" /><path d="M14.500 15V8.500H18M14.500 12H18" fill="none" stroke="#1414f0" strokeWidth="2" /></>;
  else if (name === "rect") body = <><rect x="3" y="5" width="12" height="8" fill={color === "#ff1414" ? "#b9a0aa" : "none"} stroke={color} strokeWidth="1.500" /><Cross x={15} y={4} /><Cross x={3} y={14} /></>;
  else if (name === "arrow") body = <><path d="M4 15 13 6" stroke="#000" strokeWidth="2" /><path d="M8 4h7v7z" fill="#000" /><circle cx="4.500" cy="14" r="1.800" /></>;
  else if (name === "note") body = <><path d="M2.500 3.500q0-1 1-1h11q1 0 1 1V12l-3.500 3.500H3.500q-1 0-1-1z" fill="#a5c3dc" stroke="#6496f0" /><path d="M6 6h6M9 6v7M7.500 12.500h3" stroke="#222" strokeWidth="1.800" /></>;
  else if (name === "bubble") body = <><path d="M9 2a6.500 6.500 0 1 0 2 12.500l4 2.500-1-4.500A6.500 6.500 0 0 0 9 2z" fill="#a5c3dc" stroke="#6496f0" /><path d="M6 6h6M9 6v6M7.500 11.500h3" stroke="#147828" strokeWidth="1.800" /></>;
  else if (name === "seg") body = <><path d="M5 13 14 5" stroke="#111" /><circle cx="4" cy="14" r="1.800" fill="none" stroke="#111" /><circle cx="14.500" cy="4.500" r="1.800" fill="none" stroke="#111" /></>;
  else if (name === "ray") body = <><circle cx="7" cy="9" r="1.800" fill="none" stroke={color} /><path d="M8.500 9H18" stroke={color} strokeWidth="1.800" /></>;
  else if (name === "ruler") return <Ruler className="size-4 rotate-6 text-[#56666e]" strokeWidth={1.5} />;
  else if (name === "channel") body = <><rect x="1" y="2" width="16" height="7" fill="#82b49b" /><rect x="1" y="10" width="16" height="7" fill="#c89ba0" /><path d="m1 13 3-4 3 4 5-7 2 3 3-4" fill="none" stroke="#a0b4f0" strokeWidth="1.500" /></>;
  else if (name === "ellipse") body = <><ellipse cx="9" cy="9" rx="6.500" ry="4.500" fill={color} fillOpacity=".2" stroke={color} strokeWidth="1.300" /><Cross x={16} y={4} /><Cross x={2} y={14} /></>;
  else if (name === "diag") body = <path d="M0 18 18 0" stroke={color} strokeWidth={color === "#111" ? 1 : 1.8} />;
  else if (name === "h") body = <path d={color === "#111" ? "M0 9.500h18" : "M0 9h18"} stroke={color} strokeWidth={color === "#111" ? 1 : 2} />;
  else if (name === "v") body = <path d="M9.500 0v18" stroke="#111" />;
  else if (name === "angle") body = <><path d="M2 14h14M2 14 13 4" stroke="#e65050" fill="none" /><path d="m7 7 4 6" stroke="#1414f0" strokeWidth="1.500" /><circle cx="15" cy="8" r="2" stroke="#1414f0" fill="none" /></>;
  else if (name === "circle") body = <><circle cx="9" cy="9" r="6.500" fill="#c3b4af" fillOpacity=".6" stroke="#e68c64" /><Cross x={8} y={10} /><Cross x={13} y={6} /></>;
  else if (name === "w5") body = <><path d="m2 13 4-8 3 8 3-8 3 5" stroke="#6496f0" fill="none" /><Cross x={2} y={7} /><Cross x={7} y={4} /><Cross x={13} y={3} /><Cross x={9} y={14} /><Cross x={15} y={9} /></>;
  else if (name === "abc") body = <><path d="m2 8 6 5 3-7 5 8" stroke="#6496f0" fill="none" /><Cross x={3} y={9} /><Cross x={10} y={4} /><Cross x={14} y={13} /></>;
  else if (name === "check") body = <path d="m2 10 3-2 3 3 7-9 2 2-9 12z" fill="#32c832" stroke="#148c14" strokeWidth=".7" />;
  else if (name === "thumb") return <ThumbsUp className="size-4 fill-[#3cc850] text-[#1e963c]" strokeWidth={1.5} />;
  else if (name === "x") body = <path d="m4 2 5 4 5-4 3 3-4 4 4 4-3 3-5-4-5 4-3-3 4-4-4-4z" fill="#f01414" stroke="#a00000" strokeWidth=".6" />;
  else if (name === "warn") body = <><path d="M9 2 17 16H1z" fill="#ffb41e" stroke="#c87800" /><path d="M9 6v5M9 12.500v2" stroke="#333" strokeWidth="1.800" /></>;
  else if (name === "up") body = <path d="M9 3 14 9h-3v6H7V9H4z" fill="#28a028" stroke="#147814" />;
  else if (name === "down") body = <path d="M6 4h6v6h3l-6 6-6-6h3z" fill="#dc1414" />;
  return <svg viewBox="0 0 18 18" className="size-[18px] shrink-0">{body}</svg>;
}

const TOOLS = ["cursor", "search", "area", "bellx", "bell", "alertf", "f", "rect:#508cfa", "rect:#ff1414", "arrow", "note", "bubble", "seg", "ray:#3cb43c", "ray:#ff1414", "ruler", "channel",
  "ellipse:#f01414", "ellipse:#96643c", "ellipse:#148c28", "ellipse:#14e614", "diag:#111", "diag:#3cb43c", "diag:#ff1414", "h:#111", "h:#fa8278", "h:#14e614", "h:#148228", "h:#ff1414", "h:#6496fa", "h:#0a0aa0",
  "v", "angle", "circle", "w5", "abc", "check", "thumb", "x", "warn", "up", "down"];

function ToolRail() {
  return (
    <nav aria-label="Herramientas de dibujo" className="flex w-7 shrink-0 flex-col overflow-hidden border-r border-l border-r-[#76909c] border-l-[#46606c] bg-[#9cbac8]">
      <button aria-label="Subir" className="flex h-[13px] shrink-0 items-center justify-center border-b border-[#76909c] bg-[#a9c6d3] text-[#4a626e]"><ChevronUp className="size-2.5" /></button>
      <div className="flex min-h-0 flex-1 flex-col overflow-hidden">
        {TOOLS.map((t, i) => (
          <button key={t + i} aria-label={t.split(":")[0]} className={i === 0 ? "mx-0.5 flex h-[22px] shrink-0 items-center justify-center rounded-sm border border-[#76909c] bg-[#8ba3af]" : "flex h-[22px] shrink-0 items-center justify-center"}>
            <DrawIcon kind={t} />
          </button>
        ))}
      </div>
      <button aria-label="Bajar" className="flex h-[11px] shrink-0 items-center justify-center border-y border-[#76909c] bg-[#b0cdd9]"><ChevronDown className="size-2.5" /></button>
      <button aria-label="Configuración" className="flex h-7 shrink-0 items-center justify-center">
        <svg viewBox="0 0 20 20" className="size-5"><path d="M5 4h9l2 2v9H5z" fill="#fff" stroke="#889" /><path d="m7 11 3-3 2 3 3-3" fill="none" stroke="#888" /><circle cx="4" cy="4" r="3.500" fill="#148c14" /><path d="m3 4 1.500-1.500V6.500" fill="none" stroke="#fff" /><path d="m10 17 4-4" stroke="#fff" strokeWidth="4" /><path d="m10 17 4-4a2.500 2.500 0 1 1 4-1" fill="none" stroke="#333" strokeWidth="1.500" /></svg>
      </button>
      <button aria-label="Más" className="flex h-7 shrink-0 items-center justify-center border-b border-[#76909c]">
        <svg viewBox="0 0 16 8" className="h-2 w-4"><path d="M1 2.500h2.500M6 2.500h2.500M11 2.500h2.500" stroke="#222" strokeWidth="2.500" /><path d="m10 5 3 3 3-3z" /></svg>
      </button>
      <button aria-label="Editar dibujos" className="flex h-[18px] shrink-0 items-center justify-center bg-[#8ba3af]">
        <svg viewBox="0 0 20 16" className="h-4 w-5"><path d="m2 3 5 8 2-6" fill="none" stroke="#c81414" strokeWidth="1.200" /><path d="m3 14 3-6 3 6" fill="none" stroke="#147814" strokeWidth="1.200" /><path d="m10 11 6-9 2.500 2-6 9-3 1.500z" fill="#ffd228" stroke="#7a5a14" strokeWidth=".8" /></svg>
      </button>
    </nav>
  );
}

const chip = "h-4 shrink-0 rounded-sm border border-[#5f7885] px-0.5 text-[9px] font-bold leading-[14px]";
const cell = "flex h-full shrink-0 items-center whitespace-nowrap border-r border-[#5f7885]";

function TopBar() {
  return (
    <header className="flex h-[22px] shrink-0 items-center border-t border-b-2 border-[#4a6675] bg-gradient-to-b from-[#b9d6e3] to-[#9ab9c7] text-[10px] text-black">
      <div className={`${cell} w-[23px] justify-center`}>
        <svg viewBox="0 0 14 14" className="size-3.5"><path d="M3 4v9M7 3v8M11 0v9" stroke="#6a8a6a" /><rect x="1.500" y="7" width="3" height="4" fill="#1e8c1e" /><rect x="5.500" y="4" width="3" height="5" fill="#1e8c1e" /><rect x="9.500" y="2" width="3" height="4" fill="#1e8c1e" /></svg>
      </div>
      <div className={`${cell} w-4 justify-center`}>
        <svg viewBox="0 0 8 14" className="h-3.5 w-2"><path d="M1 6V1h2v5M5 6V1h2v5M1 8v5h2V8M5 8v5h2V8" fill="none" stroke="#566e7a" /></svg>
      </div>
      <button className={`${cell} w-[34px] gap-1 pl-1`}>CL<ChevronDown className="size-2.5 shrink-0" strokeWidth={3} /></button>
      <div className={`${cell} w-[239px] justify-between pr-[3px] pl-1`}>
        {["12s", "144s", "1m", "12m", "56m", "1h", "4h", "D", "W", "M", "Q"].map((t) => (
          <button key={t} aria-pressed={t === "W"} className={t === "W" ? `${chip} bg-[#7f97a3]` : chip}>{t}</button>
        ))}
      </div>
      <button className={`${cell} w-[63px] justify-between pr-1 pl-1.5 text-[9px] font-bold`}>1 semana<ChevronDown className="size-2.5 shrink-0" strokeWidth={3} /></button>
      <div className={`${cell} w-[93px] justify-between px-[3px]`}>
        {["5kU", "10kU", "35kU"].map((t) => <button key={t} className={chip}>{t}</button>)}
      </div>
      <button className={`${cell} w-20 justify-between px-0.5 font-bold`}>200 unidades<ChevronDown className="size-2.5 shrink-0" strokeWidth={3} /></button>
      <button className={`${cell} w-[85px] gap-1 pl-1 font-bold`}>
        <svg viewBox="0 0 18 18" className="size-[18px] shrink-0"><path d="M1 7q4-10 8-3t8 3" fill="none" stroke="#1e8c1e" strokeWidth="1.500" /><path d="M1 4q4-2 8 3t8-3" fill="none" stroke="#c83232" strokeWidth="1.200" /><path d="M1 12h4v2h4v-2h4v1h4v4H1z" fill="#1ed21e" /><path d="M5 14h4M12 15h3" stroke="#e61414" strokeWidth="1.500" /></svg>
        Indicadores
      </button>
      <button aria-label="Más indicadores" className={`${cell} w-3.5 justify-center`}><ChevronDown className="size-2.5 shrink-0" strokeWidth={3} /></button>
      <div className="flex flex-1 items-center whitespace-nowrap">
        <button aria-label="Información" className="ml-[7px] size-[10px] border border-[#8a9ba4] bg-[#eef1f2] text-center text-[8px] leading-2 font-bold text-[#78909c]">i</button>
        <span className="mr-[5px] ml-[9px] size-2 rounded-full border border-[#a9b4ba] bg-[#7a7f84]" />
        <span className="w-10 rounded-sm border border-[#3cc83c] bg-[#50e650] text-center leading-3 text-white">+0,72 %</span>
        <span className="ml-1 font-bold">5 dic 2025</span>
        <span className="ml-1">Crudo EE.UU. (1€)</span>
      </div>
      <button aria-label="Actualizar" className="flex h-full w-[21px] items-center justify-center border-x border-[#5f7885]">
        <svg viewBox="0 0 16 14" className="h-3.5 w-4"><path d="M10 2Q4 0 3.500 8" fill="none" stroke="#f05050" strokeWidth="2" /><path d="m0 6 7 1-4 4z" fill="#f05050" /><path d="M6 12q6 2 6.500-6" fill="none" stroke="#1eaa1e" strokeWidth="2.500" /><path d="m9 7 7 0-3.500-4z" fill="#1eaa1e" /></svg>
      </button>
      <div className="flex items-center gap-1 px-1 text-[#6f8893]">
        <button aria-label="Minimizar"><Minus className="mt-1.5 size-2.5" strokeWidth={3} /></button>
        <button aria-label="Restaurar"><Copy className="size-2.5 -scale-x-100" strokeWidth={3} /></button>
        <button aria-label="Cerrar"><X className="size-3" strokeWidth={3} /></button>
      </div>
    </header>
  );
}

function Legend() {
  const item = "flex h-full shrink-0 items-center gap-1 border-r border-[#76909c] pl-1";
  const box = "size-2 shrink-0 appearance-none border border-[#607580]";
  return (
    <div className="absolute top-px left-0 flex h-[15px] border-b border-[#76909c] bg-[#cddbe2] text-[9px] leading-none font-bold whitespace-nowrap text-[#111]">
      <div className={`${item} w-8 pl-0.5`}>
        <svg viewBox="0 0 10 10" className="size-[10px]"><rect width="10" height="10" fill="#fff" /><path d="M4 1h2v4h2L5 9 2 5h2z" fill="#dc1414" /></svg>
        <svg viewBox="0 0 10 10" className="size-[10px]"><rect width="10" height="10" fill="#fff" /><path d="M4 9h2V5h2L5 1 2 5h2z" fill="#14a014" /></svg>
      </div>
      <label className={`${item} w-[47px] pl-[3px]`}><input type="checkbox" className={box} />Precio</label>
      <div className={`${item} w-[17px]`}><svg viewBox="0 0 9 8" className="h-2 w-[9px]"><path d="M0 1h2M3 1h6M0 4h2M3 4h6M0 7h2M3 7h6" stroke="#111" /></svg></div>
      <label className={`${item} w-16 pl-[3px]`}><input type="checkbox" className={box} />Cierre (W)</label>
      <div className={`${item} w-[136px]`}><span className="size-2 shrink-0 bg-[#6f8893]" />Tunel Domenec v4 (t t t t t)</div>
      <div className={`${item} w-[115px]`}><span className="flex shrink-0"><i className="h-2 w-0.5 bg-black" /><i className="h-2 w-0.5 bg-[#f0e600]" /><i className="h-2 w-0.5 bg-[#ff00ff]" /><i className="h-2 w-0.5 bg-[#1e96f0]" /></span>Control Total Doc v.6</div>
      <div className={`${item} w-[141px]`}><span className="size-2 shrink-0 bg-black" />Multi Avisos (3 f 3 1,5 70 f f)</div>
      <label className={`${item} w-[196px] pl-[3px]`}><input type="checkbox" className={box} /><span className="pl-1">DS_CotasHist (1 t t t 3 1 1 f f f f f f f f ...)</span></label>
    </div>
  );
}

function PaneTitle({ children, left, right }: { children: string; left: string; right: string }) {
  return (
    <div className="absolute top-0 left-0 flex h-4 items-center gap-1.5 border-r border-b border-[#76909c] bg-[#cddbe2] px-[3px] text-[9px] leading-none font-bold whitespace-nowrap text-[#111]">
      <span className="flex"><i className={`h-2 w-1 ${left}`} /><i className={`h-2 w-1 ${right}`} /></span>
      {children}
    </div>
  );
}

function BottomBar() {
  const ib = "flex w-[21px] shrink-0 items-center justify-center";
  const rb = "flex w-[22px] shrink-0 items-center justify-center";
  return (
    <footer className="flex h-[19px] shrink-0 items-stretch overflow-hidden border-t border-[#76909c] bg-[#9cbac8]">
      <button aria-label="Compartir" className={ib}><Share2 className="size-3.5 fill-white text-white" strokeWidth={1.5} /></button>
      <button aria-label="Comentarios" className={ib}><MessageSquareMore className="size-3.5 fill-[#3c78e6] text-white" strokeWidth={2} /></button>
      <button aria-label="Informe" className={ib}><svg viewBox="0 0 12 14" className="h-3.5 w-3"><rect x=".5" y="1" width="10" height="12" fill="#f5f5f5" stroke="#333" /><path d="M2 4h5M2 8h7M2 11h7" stroke="#333" /><path d="M7 4h3" stroke="#dc1414" strokeWidth="2" /><path d="M3 8h4" stroke="#14a014" strokeWidth="2" /></svg></button>
      <button aria-label="Órdenes" className={ib}><svg viewBox="0 0 14 14" className="size-3.5"><path d="M1 2h8M1 5.500h5M1 9h7M1 12.500h8" stroke="#1e9632" strokeWidth="2.500" /><path d="M7 5.500h6M8 9h5" stroke="#dc3232" strokeWidth="2.500" /></svg></button>
      <button aria-label="Ventanas" className={ib}><svg viewBox="0 0 16 14" className="h-3.5 w-4"><rect x="1" y="1" width="9" height="7" fill="#fff" stroke="#2864c8" /><rect x="5" y="5" width="10" height="8" fill="#fff" stroke="#2864c8" /><path d="m6 11 2-3 2 3 3-4" fill="none" stroke="#14a014" /></svg></button>
      <button aria-label="Plegar" className="flex w-3 shrink-0 items-center justify-center text-[#37474f]"><ChevronsLeft className="size-3" /></button>
      <div className="mt-[3px] mb-0.5 ml-1 flex min-w-0 flex-1 border border-[#76909c]">
        <button aria-label="Desplazar a la izquierda" className="flex w-3 items-center justify-center border-r border-[#76909c] bg-[#a9c6d3]"><ChevronLeft className="size-2.5" strokeWidth={3} /></button>
        <div className="flex-[1001]" />
        <div className="flex-[589] border-l border-[#76909c] bg-gradient-to-b from-[#b9d6e1] to-[#9fbfcc]" />
        <button aria-label="Desplazar a la derecha" className="flex w-3 items-center justify-center border-l border-[#76909c] bg-[#a9c6d3]"><ChevronRight className="size-2.5" strokeWidth={3} /></button>
      </div>
      <button aria-label="Deshacer" className={`${rb} ml-[3px] text-[#5a96d2]`}><Undo2 className="size-3" strokeWidth={3} /></button>
      <button aria-label="Rehacer" className={`${rb} text-[#5a96d2]`}><Redo2 className="size-3" strokeWidth={3} /></button>
      <button aria-label="Propiedades" className={rb}><svg viewBox="0 0 14 14" className="size-3.5"><rect x="1" y="7" width="5" height="6" fill="#e65050" /><rect x="9" y="1" width="4" height="9" fill="#3cc83c" /><path d="m4 13 5-7" stroke="#fff" strokeWidth="3" /><path d="m4 13 5-7a2.500 2.500 0 1 1 3-2" fill="none" stroke="#333" strokeWidth="1.200" /></svg></button>
      <button aria-label="Ajustar zoom" className={rb}><svg viewBox="0 0 16 14" className="h-3.5 w-4"><circle cx="6" cy="5" r="4" fill="#dfe8ec" stroke="#111" strokeWidth="1.500" /><path d="m9 8 3 4" stroke="#111" strokeWidth="2" /><path d="M14.500 1v8M1 12.500h7" stroke="#1414f0" strokeWidth="1.500" /></svg></button>
      <button aria-label="Alejar" className={rb}><ZoomOut className="size-3.5 text-[#111]" /></button>
      <button aria-label="Acercar" className={rb}><ZoomIn className="size-3.5 text-[#111]" /></button>
      <button aria-label="Más opciones" className="flex w-[17px] shrink-0 items-center justify-end"><svg viewBox="0 0 14 12" className="h-3 w-3.5"><path d="M0 2h14" stroke="#222" strokeWidth="2" strokeDasharray="2 1" /><path d="M7 4v6M4 7l3 3 3-3" fill="none" stroke="#1464f0" strokeWidth="1.500" /></svg></button>
    </footer>
  );
}

export default function App() {
  return (
    <div className="flex h-screen flex-col overflow-hidden bg-white font-['Liberation_Sans',Arial,sans-serif]">
      <TopBar />
      <div className="flex min-h-0 flex-1">
        <ToolRail />
        <main className="flex min-w-0 flex-1 flex-col">
          <div className="grid min-h-0 flex-1 grid-rows-[655fr_78fr_86fr_97fr_57fr_15fr]">
            <section className="relative min-h-0"><PriceChart /><Legend /></section>
            <section className="relative min-h-0"><TrainsPane /><PaneTitle left="bg-[#5f7883]" right="bg-black">Sistema de trenes Doc v4 (f f)</PaneTitle></section>
            <section className="relative min-h-0"><WillyPane /><PaneTitle left="bg-[#6f8893]" right="bg-[#6f8893]">Willy Doc (t)</PaneTitle></section>
            <section className="relative min-h-0"><AwesomePane /><PaneTitle left="bg-[#6f8893]" right="bg-[#6f8893]">Awesome Evolution Doc</PaneTitle></section>
            <section className="relative min-h-0"><ForcePane /><PaneTitle left="bg-black" right="bg-[#6f8893]">Barra Fuerza Fondo Mercado v4 (f)</PaneTitle></section>
            <svg role="img" aria-label="Eje temporal" viewBox="28 995 1888 15" preserveAspectRatio="none" className="block h-full w-full">
              {MONTHS.map(([x, t]) => (
                <g key={x}>
                  <rect x={x} y="995" width="1" height="3" fill={LINE} />
                  <text x={x} y="1008" fontSize="10" fontWeight="700" textAnchor="middle" fill="#111">{t}</text>
                </g>
              ))}
            </svg>
          </div>
          <BottomBar />
        </main>
      </div>
    </div>
  );
}
